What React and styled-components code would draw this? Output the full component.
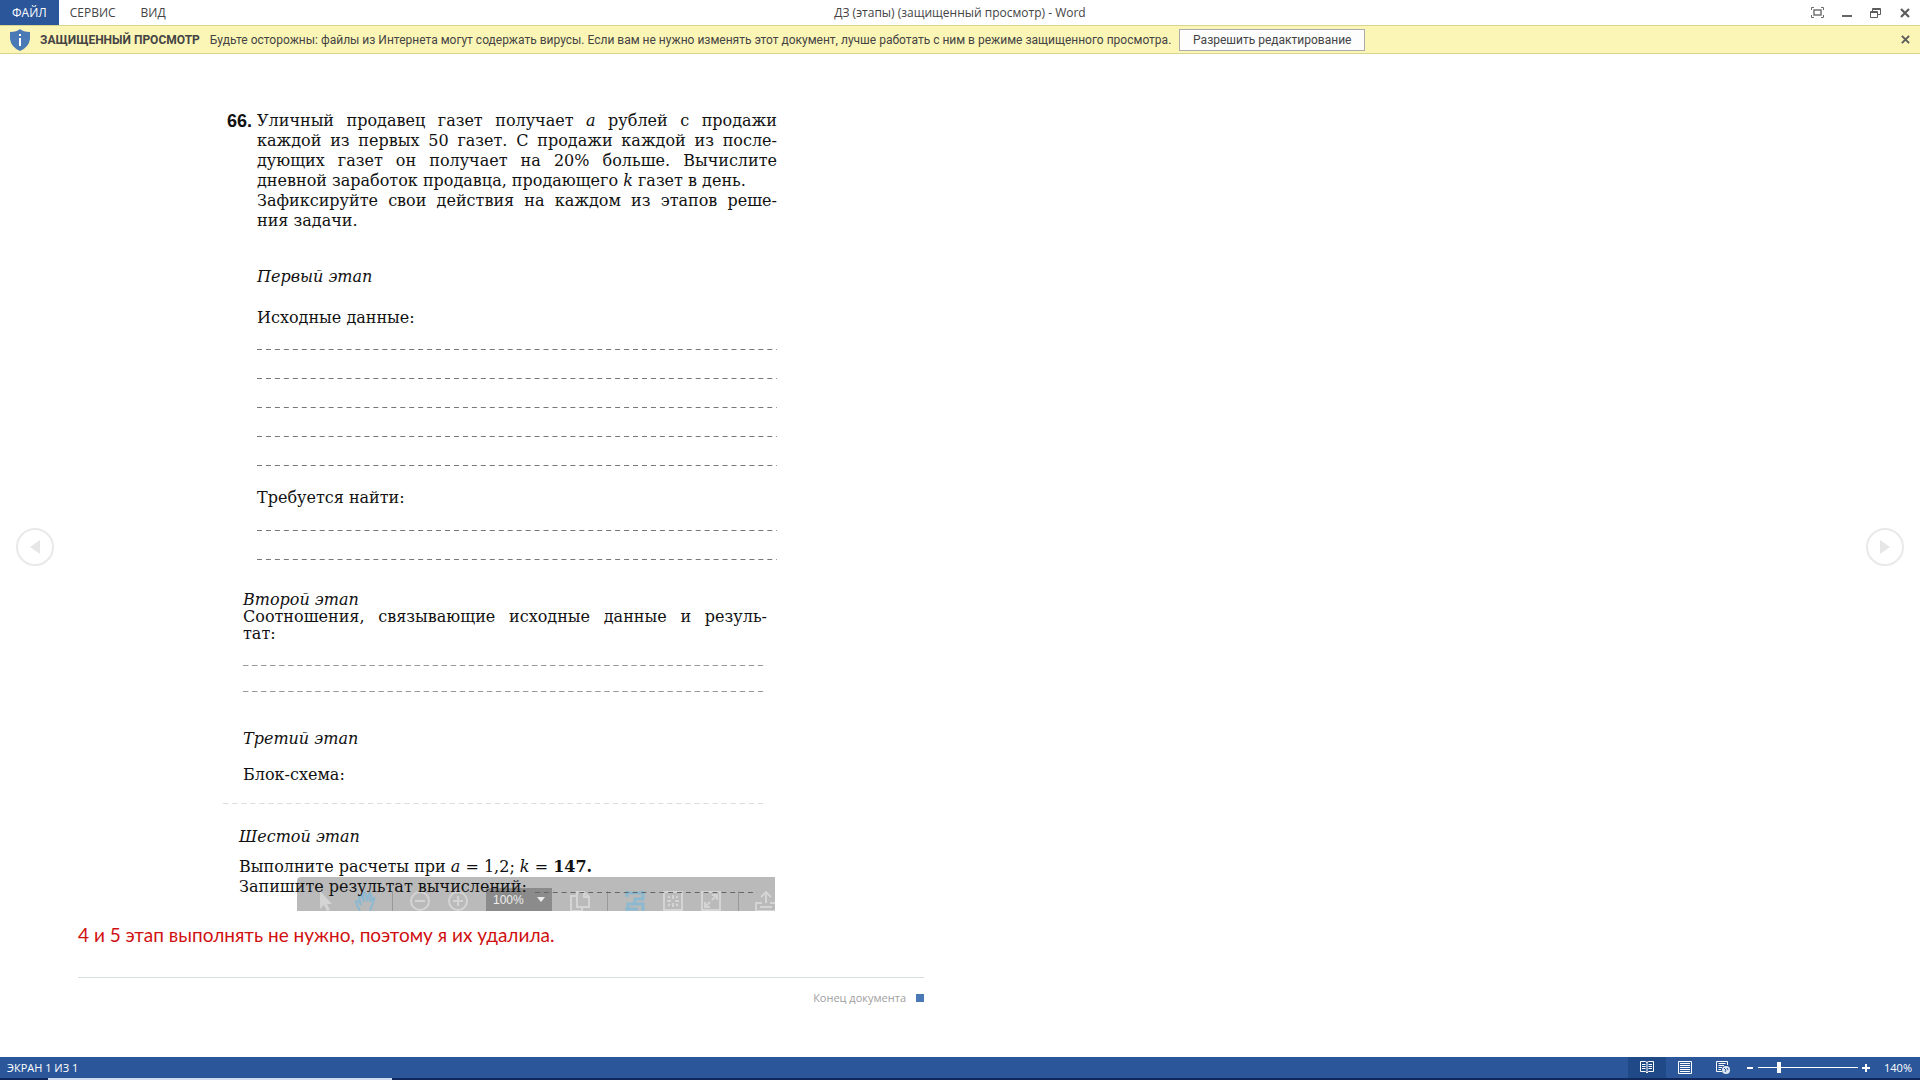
import { useState } from 'react';
import styled, { createGlobalStyle } from 'styled-components';


const toolIcons = {
    cursor: <path d="M4 0 L4 18 L8 14 L11 20 L14 19 L11 13 L16 13 Z" fill="currentColor" stroke="none" />,
    hand: <path d="M6 20 L2 12 Q2 9 4 10 L7 14 L5 6 Q6 3 8 6 L10 11 L9 3 Q11 0 12 3 L13 10 L15 3 Q17 1 17 4 L16 11 L19 7 Q21 6 20 9 L17 17 L16 20" />,
    minus: <><circle cx="11" cy="10" r="9" /><path d="M6 10 H16" /></>,
    plus: <><circle cx="11" cy="10" r="9" /><path d="M6 10 H16 M11 5 V15" /></>,
    copy: <path d="M8 1 H15 L20 6 V16 H8 Z M15 1 V6 H20 M8 5 H2 V20 H13 V16" />,
    fit: <path d="M1 2 H21 M3 0 V6 M19 0 V8 H11 V13 H4 V20 M1 18 H14 M11 13 H19 V20" strokeWidth="3" />,
    page: <><rect x="2" y="1" width="18" height="18" /><path d="M11 4 V8 M11 12 V16 M5 10 H9 M13 10 H17 M6 5 L8 7 M16 5 L14 7 M6 15 L8 13 M16 15 L14 13" /></>,
    expand: <><rect x="2" y="1" width="18" height="18" /><path d="M12 9 L17 4 M12 4 H17 V9 M10 11 L5 16 M5 11 V16 H10" /></>,
    upload: <path d="M11 12 V1 M6 6 L11 1 L16 6 M7 12 H1 V20 H21 V12 H15 M5 16 H17" />,
}


function ToolIcon({ name, blue }) {
    return (
        <ToolButton type="button" aria-label={name} $blue={blue}>
            <svg width="22" height="20" viewBox="0 0 22 20" fill="none" stroke="currentColor" strokeWidth="2">{toolIcons[name]}</svg>
        </ToolButton>
    )
}


function Blanks({ count, gap = 27, top, color }) {
    return (
        <BlankList $gap={gap} $top={top}>
            {Array.from({ length: count }, (_, i) => <Blank key={i} $color={color} />)}
        </BlankList>
    )
}


function CloseIcon({ size }) {
    return (
        <svg width={size} height={size} viewBox="0 0 10 10" stroke="#5c5c5c" strokeWidth="2.2">
            <path d="M1 1 L9 9 M9 1 L1 9" />
        </svg>
    )
}


function TitleBar() {
    return (
        <Header>
            <Tabs>
                <Tab type="button" $active>ФАЙЛ</Tab>
                <Tab type="button">СЕРВИС</Tab>
                <Tab type="button">ВИД</Tab>
            </Tabs>
            <Title>ДЗ (этапы) (защищенный просмотр) - Word</Title>
            <WindowButtons>
                <IconButton type="button" aria-label="Во весь экран">
                    <svg width="13" height="11" viewBox="0 0 13 11" fill="none" stroke="#6a6a6a">
                        <path d="M0.5 3 V0.5 H3 M10 0.5 H12.5 V3 M12.5 8 V10.5 H10 M3 10.5 H0.5 V8" />
                        <rect x="3" y="3" width="7" height="5" strokeWidth="1.4" />
                    </svg>
                </IconButton>
                <IconButton type="button" aria-label="Свернуть">
                    <svg width="10" height="11" viewBox="0 0 10 11"><rect y="8" width="10" height="2" fill="#666" /></svg>
                </IconButton>
                <IconButton type="button" aria-label="Восстановить">
                    <svg width="11" height="10" viewBox="0 0 11 10" fill="none" stroke="#5c5c5c">
                        <path d="M2.5 3 V0.5 H10.5 V6.5 H8 M2.5 1.5 H10" />
                        <path d="M0.5 3.5 H7.5 V9.5 H0.5 Z M0.5 4.5 H7" />
                    </svg>
                </IconButton>
                <IconButton type="button" aria-label="Закрыть"><CloseIcon size={10} /></IconButton>
            </WindowButtons>
        </Header>
    )
}


function WarningBar() {
    return (
        <Warning>
            <svg width="20" height="22" viewBox="0 0 20 22">
                <path d="M10 0 Q13 3 20 3 V10 Q19 18 10 22 Q1 18 0 10 V3 Q7 3 10 0 Z" fill="#4a7ab5" />
                <path d="M9 9 H11 V17 H9 Z M9 5 H11 V7 H9 Z" fill="#fff" />
            </svg>
            <WarningTitle>ЗАЩИЩЕННЫЙ ПРОСМОТР</WarningTitle>
            <WarningText>Будьте осторожны: файлы из Интернета могут содержать вирусы. Если вам не нужно изменять этот документ, лучше работать с ним в режиме защищенного просмотра.</WarningText>
            <EnableButton type="button">Разрешить редактирование</EnableButton>
            <CloseWarning type="button" aria-label="Закрыть сообщение"><CloseIcon size={9} /></CloseWarning>
        </Warning>
    )
}


function Worksheet() {
    return (
        <Sheet>
            <Problem>
                <Number>66.</Number>
                <div>
                    <Line $fill>Уличный продавец газет получает <i>a</i> рублей с продажи</Line>
                    <Line $fill>каждой из первых 50 газет. С продажи каждой из после-</Line>
                    <Line $fill>дующих газет он получает на 20% больше. Вычислите</Line>
                    <Line>дневной заработок продавца, продающего <i>k</i> газет в день.</Line>
                    <Line $fill>Зафиксируйте свои действия на каждом из этапов реше-</Line>
                    <Line>ния задачи.</Line>
                </div>
            </Problem>
            <Section $left={34} $right={2}>
                <Stage $top={36}>Первый этап</Stage>
                <Label $top={21}>Исходные данные:</Label>
                <Blanks count={5} top={21} />
                <Label $top={21}>Требуется найти:</Label>
                <Blanks count={2} top={22} />
            </Section>
            <Section $left={20} $right={12}>
                <Stage $top={30} $tight>Второй этап</Stage>
                <Line $fill $tight>Соотношения, связывающие исходные данные и резуль-</Line>
                <Line $tight>тат:</Line>
                <Blanks count={2} gap={24} top={23} color="#999" />
                <Stage $top={36}>Третий этап</Stage>
                <Label $top={16}>Блок-схема:</Label>
            </Section>
            <Section $left={0} $right={12}>
                <Blanks count={1} top={18} color="#ddd" />
            </Section>
            <LastSection>
                <Stage $top={0}>Шестой этап</Stage>
                <Label $top={10}>Выполните расчеты при <i>a</i> = 1,2; <i>k</i> = <b>147.</b></Label>
                <Answer>
                    <span>Запишите результат вычислений:</span>
                    <Blank $color="#666" />
                </Answer>
            </LastSection>
            <PdfBar>
                <ToolIcon name="cursor" />
                <ToolIcon name="hand" blue />
                <Divider />
                <ToolIcon name="minus" />
                <ToolIcon name="plus" />
                <PdfZoom>
                    <select aria-label="Масштаб" defaultValue="100%"><option>100%</option></select>
                    <svg width="8" height="5" viewBox="0 0 8 5"><path d="M0 0 H8 L4 5 Z" fill="#eee" /></svg>
                </PdfZoom>
                <ToolIcon name="copy" />
                <Divider />
                <ToolIcon name="fit" blue />
                <ToolIcon name="page" />
                <ToolIcon name="expand" />
                <Divider />
                <ToolIcon name="upload" />
            </PdfBar>
        </Sheet>
    )
}


function StatusBar() {
    const [zoom, setZoom] = useState(20)

    return (
        <Status>
            <span>ЭКРАН 1 ИЗ 1</span>
            <StatusTools>
                <ViewButton type="button" aria-label="Режим чтения" $active>
                    <svg width="14" height="13" viewBox="0 0 14 13" fill="none" stroke="#fff">
                        <path d="M0.5 0.5 H5.5 L7 1.5 L8.5 0.5 H13.5 V10.5 H8.5 L7 12 L5.5 10.5 H0.5 Z M7 1 V12" />
                        <path d="M2 3.5 H5.5 M2 5.5 H5.5 M2 7.5 H5.5 M8.5 3.5 H12 M8.5 5.5 H12 M8.5 7.5 H12" />
                    </svg>
                </ViewButton>
                <ViewButton type="button" aria-label="Разметка страницы">
                    <svg width="14" height="13" viewBox="0 0 14 13" fill="none" stroke="#fff">
                        <path d="M0.5 0.5 H13.5 V12.5 H0.5 Z M2 2.5 H12 M2 4.5 H12 M2 6.5 H12 M2 8.5 H12 M2 10.5 H12" />
                    </svg>
                </ViewButton>
                <ViewButton type="button" aria-label="Веб-документ">
                    <svg width="14" height="13" viewBox="0 0 14 13" fill="none" stroke="#fff">
                        <path d="M6 10.5 H0.5 V0.5 H11.5 V4 M2.5 2.5 H9.5 M2.5 4.5 H8 M2.5 6.5 H6 M2.5 8.5 H5" />
                        <circle cx="10" cy="9" r="4" fill="#dfe7f3" stroke="none" />
                        <path d="M8 7 L10 9 L9 11 M11 7 L12 9" stroke="#2b579a" />
                    </svg>
                </ViewButton>
                <ZoomStep type="button" aria-label="Уменьшить">
                    <svg width="8" height="8" viewBox="0 0 8 8"><path d="M1 3 H7 V5 H1 Z" fill="#fff" /></svg>
                </ZoomStep>
                <Slider type="range" aria-label="Масштаб" min="0" max="100" value={zoom} onChange={(e) => setZoom(e.target.value)} />
                <ZoomStep type="button" aria-label="Увеличить">
                    <svg width="8" height="8" viewBox="0 0 8 8"><path d="M0 3 H3 V0 H5 V3 H8 V5 H5 V8 H3 V5 H0 Z" fill="#fff" /></svg>
                </ZoomStep>
                <ZoomValue>140%</ZoomValue>
            </StatusTools>
        </Status>
    )
}


export default function App() {
    return (
        <Screen>
            <GlobalStyle />
            <TitleBar />
            <WarningBar />
            <Reader>
                <PageButton type="button" aria-label="Назад">
                    <svg width="10" height="14" viewBox="0 0 10 14"><path d="M10 0 V14 L0 7 Z" fill="#e6e6e6" /></svg>
                </PageButton>
                <Columns>
                    <article>
                        <Worksheet />
                        <Note>4 и 5 этап выполнять не нужно, поэтому я их удалила.</Note>
                        <EndMark>Конец документа<EndSquare /></EndMark>
                    </article>
                </Columns>
                <PageButton type="button" aria-label="Вперед">
                    <svg width="10" height="14" viewBox="0 0 10 14"><path d="M0 0 V14 L10 7 Z" fill="#e6e6e6" /></svg>
                </PageButton>
            </Reader>
            <StatusBar />
            <Taskbar><TaskbarItem /></Taskbar>
        </Screen>
    )
}



const GlobalStyle = createGlobalStyle`

    * { box-sizing: border-box; }

    body {
        margin: 0;
        background: #fff;
        color: #444;
        font-family: 'Open Sans', 'Noto Sans', sans-serif;
        font-size: 12px;
    }

    button, select, input {
        margin: 0;
        padding: 0;
        border: 0;
        background: none;
        color: inherit;
        font: inherit;
    }

    svg { display: block; }

`

const Screen = styled.div`

    display: flex;
    flex-direction: column;
    min-height: 100vh;

`

const Header = styled.header`

    display: grid;
    grid-template-columns: 1fr auto 1fr;
    align-items: center;
    height: 25px;

`

const Tabs = styled.nav`

    display: flex;
    height: 25px;

`

const Tab = styled.button`

    padding: 0 ${({ $active }) => $active ? '12px' : '11px'};
    margin-right: ${({ $active }) => $active ? '0' : '3px'};
    background: ${({ $active }) => $active ? '#2b579a' : 'transparent'};
    color: ${({ $active }) => $active ? '#fff' : '#444'};

`

const Title = styled.div`

    color: #444;
    white-space: nowrap;

`

const WindowButtons = styled.div`

    display: flex;
    justify-content: flex-end;
    padding-right: 1px;

`

const IconButton = styled.button`

    display: flex;
    align-items: center;
    justify-content: center;
    width: 29px;
    height: 22px;

`

const Warning = styled.div`

    display: flex;
    align-items: center;
    height: 29px;
    padding: 0 10px;
    background: #fcf6b6;
    border-top: 1px solid #d8d591;
    border-bottom: 1px solid #d8d591;
    font-family: 'Roboto', sans-serif;
    white-space: nowrap;

`

const WarningTitle = styled.strong`

    margin-left: 10px;

`

const WarningText = styled.span`

    margin-left: 10px;

`

const EnableButton = styled.button`

    width: 186px;
    height: 22px;
    margin-left: 8px;
    background: #fdfdfd;
    border: 1px solid #ababab;

`

const CloseWarning = styled.button`

    margin-left: auto;

`

const Reader = styled.main`

    display: flex;
    flex: 1;
    gap: 24px;
    padding: 0 16px;

`

const PageButton = styled.button`

    display: flex;
    flex: none;
    align-items: center;
    justify-content: center;
    align-self: center;
    width: 38px;
    height: 38px;
    margin-bottom: 18px;
    border: 2px solid #e9e9e9;
    border-radius: 50%;

`

const Columns = styled.div`

    display: grid;
    flex: 1;
    grid-template-columns: 1fr 1fr;
    gap: 72px;

`

const Sheet = styled.section`

    position: relative;
    isolation: isolate;
    width: 556px;
    margin: 57px auto 0;
    padding-bottom: 14px;
    color: #111;
    font-family: 'DejaVu Serif', serif;
    font-size: 16px;
    line-height: 20px;

`

const Problem = styled.div`

    display: grid;
    grid-template-columns: 30px 1fr;
    padding: 0 2px 0 4px;

`

const Number = styled.b`

    font-family: 'Liberation Sans', sans-serif;
    font-size: 18px;

`

const Line = styled.div`

    line-height: ${({ $tight }) => $tight ? '17px' : '20px'};
    text-align-last: ${({ $fill }) => $fill ? 'justify' : 'left'};
    white-space: nowrap;

`

const Section = styled.div`

    display: flow-root;
    padding-left: ${({ $left }) => $left}px;
    padding-right: ${({ $right }) => $right}px;

`

const LastSection = styled.div`

    margin-top: 22px;
    padding: 0 22px 0 16px;

`

const Stage = styled.h2`

    margin: ${({ $top }) => $top}px 0 0;
    font-size: 16px;
    font-style: italic;
    font-weight: normal;
    line-height: ${({ $tight }) => $tight ? '17px' : '20px'};

`

const Label = styled.p`

    margin: ${({ $top }) => $top}px 0 0;

`

const BlankList = styled.div`

    display: grid;
    gap: ${({ $gap }) => $gap}px;
    margin-top: ${({ $top }) => $top}px;

`

const Blank = styled.div`

    flex: 1;
    height: 1px;
    margin-bottom: 1px;
    background-image: linear-gradient(to right, ${({ $color }) => $color || '#777'} 5px, transparent 5px);
    background-size: 9px 1px;
    background-repeat: round no-repeat;

`

const Answer = styled.div`

    display: flex;
    align-items: flex-end;
    gap: 8px;

    ${Blank} { margin-bottom: 4px; }

`

const PdfBar = styled.div`

    position: absolute;
    right: 4px;
    bottom: 0;
    z-index: -1;
    display: flex;
    width: 478px;
    height: 34px;
    padding-left: 11px;
    overflow: hidden;
    background: #bababa;
    border-top-left-radius: 4px;

`

const ToolButton = styled.button`

    flex: none;
    width: 38px;
    padding: 14px 8px 0;
    color: ${({ $blue }) => $blue ? '#8cb9d0' : '#d4d4d4'};

`

const Divider = styled.span`

    flex: none;
    width: 1px;
    margin: 14px 8px 0;
    background: #999;

`

const PdfZoom = styled.label`

    display: flex;
    flex: none;
    align-items: center;
    justify-content: space-between;
    width: 66px;
    height: 23px;
    margin: 11px 9px 0;
    padding: 0 7px;
    background: #8b8b8b;
    color: #eee;
    font-family: 'Liberation Sans', sans-serif;
    font-size: 12px;

    select { appearance: none; }

`

const Note = styled.p`

    margin: 11px 0 0;
    color: #d01010;
    font-family: 'Lato', 'Open Sans', sans-serif;
    font-size: 19px;
    line-height: 26px;

`

const EndMark = styled.footer`

    display: flex;
    align-items: center;
    justify-content: flex-end;
    gap: 10px;
    margin-top: 29px;
    padding-top: 12px;
    border-top: 1px solid #d8dde0;
    color: #a0a0a0;
    font-size: 11px;
    line-height: 16px;

`

const EndSquare = styled.span`

    width: 8px;
    height: 8px;
    background: #4a7ab5;

`

const Status = styled.footer`

    display: flex;
    align-items: center;
    justify-content: space-between;
    height: 21px;
    padding: 0 8px 0 7px;
    background: #2b579a;
    color: #fff;
    font-size: 11px;

`

const StatusTools = styled.div`

    display: flex;
    align-items: center;
    height: 21px;

`

const ViewButton = styled.button`

    display: flex;
    align-items: center;
    justify-content: center;
    width: 38px;
    height: 21px;
    background: ${({ $active }) => $active ? '#204a87' : 'transparent'};

`

const ZoomStep = styled.button`

    padding: 4px;

`

const Slider = styled.input`

    appearance: none;
    width: 100px;
    height: 11px;
    background: linear-gradient(#fff, #fff) center / 100% 1px no-repeat;

    &::-webkit-slider-thumb {
        appearance: none;
        width: 4px;
        height: 11px;
        background: #fff;
    }

`

const ZoomValue = styled.span`

    width: 38px;
    text-align: right;

`

const Taskbar = styled.div`

    height: 2px;
    padding-left: 48px;
    background: #12275a;

`

const TaskbarItem = styled.div`

    width: 344px;
    height: 2px;
    background: #cfdcf0;

`
